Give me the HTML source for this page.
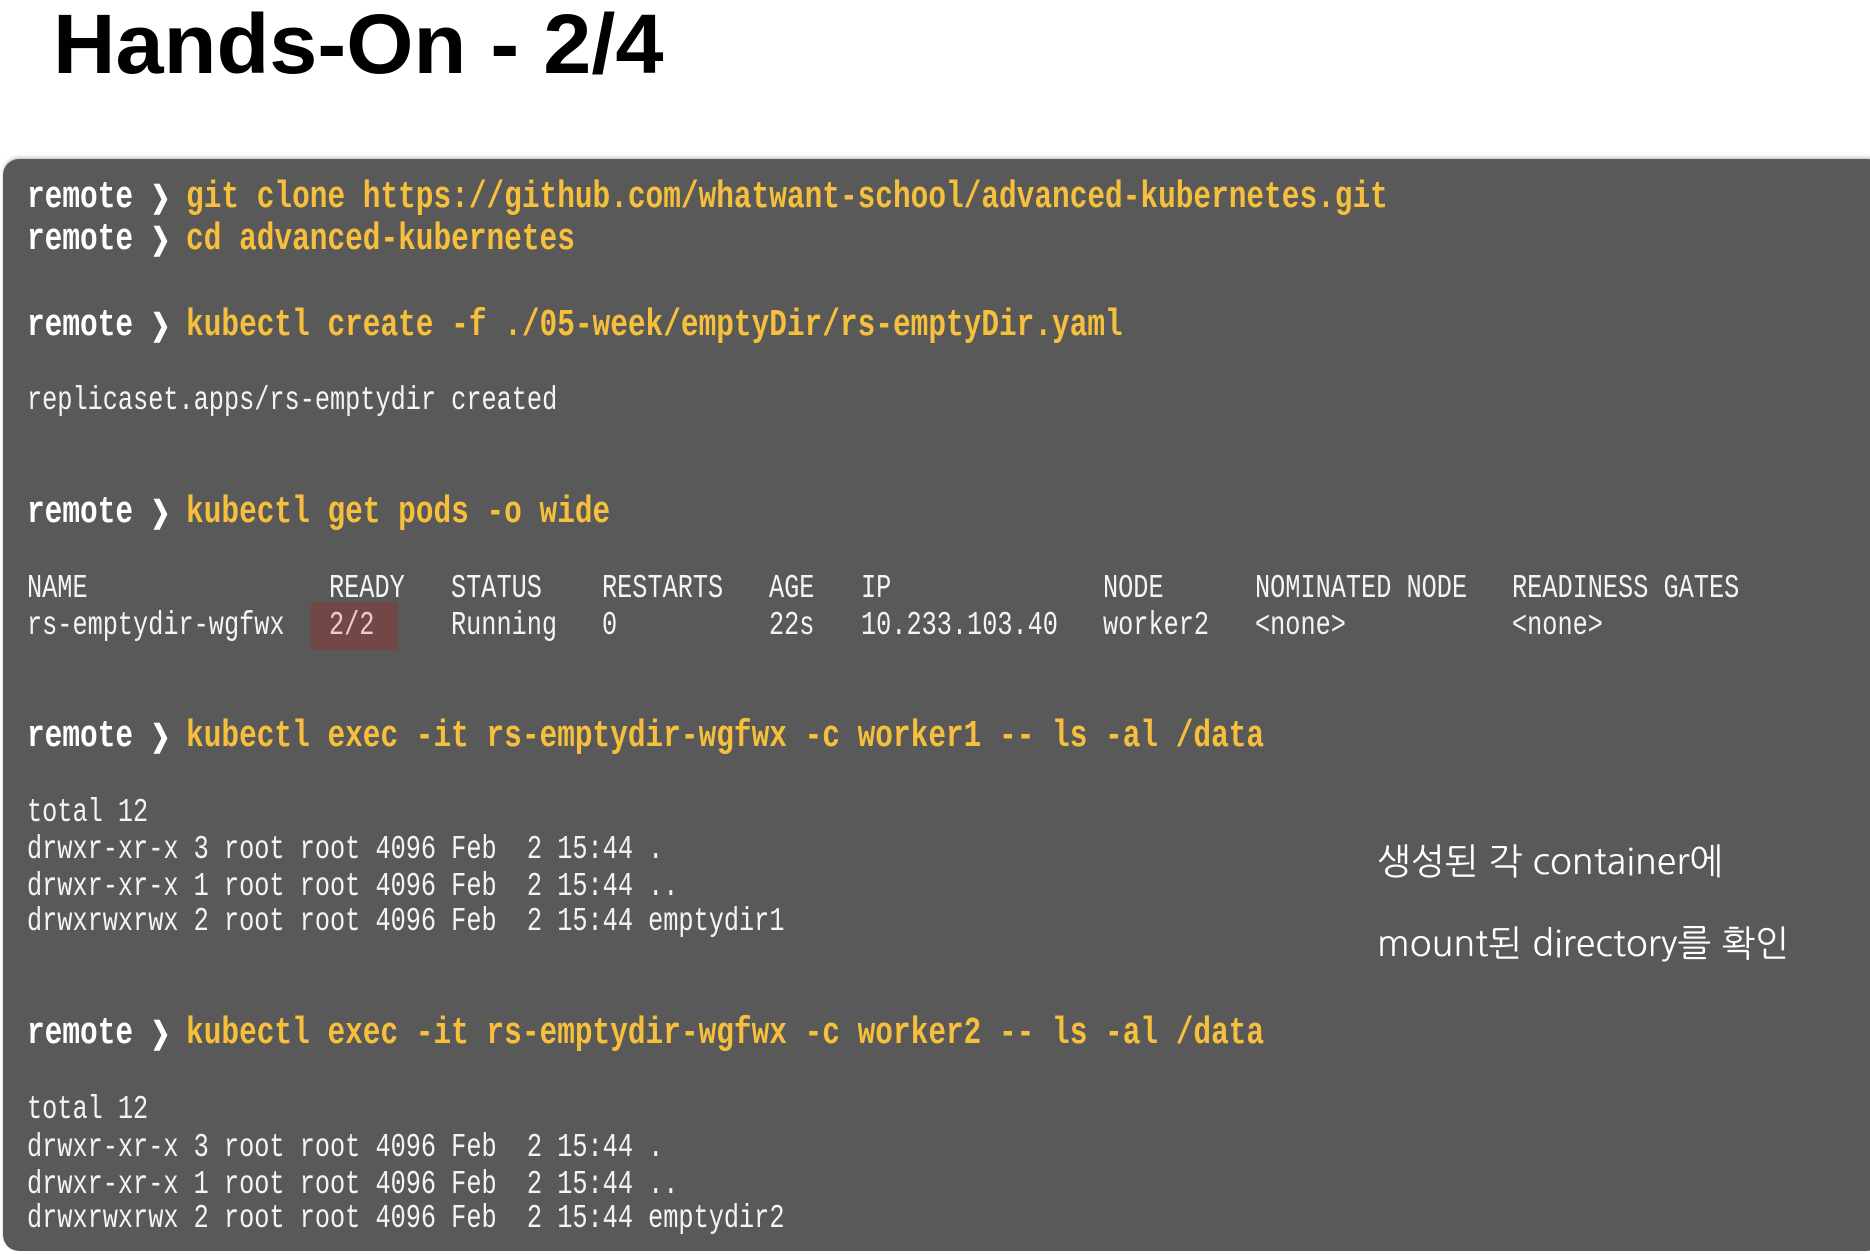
<!DOCTYPE html>
<html><head><meta charset="utf-8"><style>
html,body{margin:0;padding:0;}
body{width:1870px;height:1254px;position:relative;overflow:hidden;background:#fff;}
.title{position:absolute;left:53px;top:-4px;font-family:"Liberation Sans","DejaVu Sans",sans-serif;font-weight:bold;font-size:84px;color:#000;transform:scaleX(1.03);transform-origin:left;white-space:nowrap;}
.term{position:absolute;left:3px;top:159px;width:1880px;height:1092px;background:#595959;border-radius:16px;box-shadow:0 -2px 3px #ccc;}
.l{position:absolute;white-space:pre;font-family:"Liberation Mono",monospace;transform-origin:left center;line-height:40px;height:40px;}
.c{font-size:38px;transform:scaleX(0.775);color:#f6bf3c;font-weight:bold;}
.c b{color:#fff;}
.c i{font-style:normal;font-size:30px;display:inline-block;width:22.8px;text-align:center;}
.o{font-size:33px;transform:scaleX(0.765);color:#f4f4f4;}
.hl{position:absolute;left:311px;top:602px;width:87px;height:48px;background:#744747;}
.pk{color:#f3c9c9;}
.note{position:absolute;color:#fff;font-family:"NanumGothic","Noto Sans CJK KR",sans-serif;font-size:36px;white-space:nowrap;font-weight:300;}
</style></head><body>
<div class="title">Hands-On - 2/4</div>
<div class="term"></div>
<div class="hl"></div>
<div class="l c" style="left:27px;top:178px"><b>remote <i>❯</i></b> git clone https://github.com/whatwant-school/advanced-kubernetes.git</div>
<div class="l c" style="left:27px;top:220px"><b>remote <i>❯</i></b> cd advanced-kubernetes</div>
<div class="l c" style="left:27px;top:306px"><b>remote <i>❯</i></b> kubectl create -f ./05-week/emptyDir/rs-emptyDir.yaml</div>
<div class="l o" style="left:27px;top:381px">replicaset.apps/rs-emptydir created</div>
<div class="l c" style="left:27px;top:493px"><b>remote <i>❯</i></b> kubectl get pods -o wide</div>
<div class="l o" style="left:27px;top:569px">NAME</div>
<div class="l o" style="left:329px;top:569px">READY</div>
<div class="l o" style="left:451px;top:569px">STATUS</div>
<div class="l o" style="left:602px;top:569px">RESTARTS</div>
<div class="l o" style="left:769px;top:569px">AGE</div>
<div class="l o" style="left:861px;top:569px">IP</div>
<div class="l o" style="left:1103px;top:569px">NODE</div>
<div class="l o" style="left:1255px;top:569px">NOMINATED NODE</div>
<div class="l o" style="left:1512px;top:569px">READINESS GATES</div>
<div class="l o" style="left:27px;top:606px">rs-emptydir-wgfwx</div>
<div class="l o pk" style="left:329px;top:606px">2/2</div>
<div class="l o" style="left:451px;top:606px">Running</div>
<div class="l o" style="left:602px;top:606px">0</div>
<div class="l o" style="left:769px;top:606px">22s</div>
<div class="l o" style="left:861px;top:606px">10.233.103.40</div>
<div class="l o" style="left:1103px;top:606px">worker2</div>
<div class="l o" style="left:1255px;top:606px">&lt;none&gt;</div>
<div class="l o" style="left:1512px;top:606px">&lt;none&gt;</div>
<div class="l c" style="left:27px;top:717px"><b>remote <i>❯</i></b> kubectl exec -it rs-emptydir-wgfwx -c worker1 -- ls -al /data</div>
<div class="l o" style="left:27px;top:793px">total 12</div>
<div class="l o" style="left:27px;top:830px">drwxr-xr-x 3 root root 4096 Feb  2 15:44 .</div>
<div class="l o" style="left:27px;top:867px">drwxr-xr-x 1 root root 4096 Feb  2 15:44 ..</div>
<div class="l o" style="left:27px;top:902px">drwxrwxrwx 2 root root 4096 Feb  2 15:44 emptydir1</div>
<div class="l c" style="left:27px;top:1014px"><b>remote <i>❯</i></b> kubectl exec -it rs-emptydir-wgfwx -c worker2 -- ls -al /data</div>
<div class="l o" style="left:27px;top:1090px">total 12</div>
<div class="l o" style="left:27px;top:1128px">drwxr-xr-x 3 root root 4096 Feb  2 15:44 .</div>
<div class="l o" style="left:27px;top:1165px">drwxr-xr-x 1 root root 4096 Feb  2 15:44 ..</div>
<div class="l o" style="left:27px;top:1199px">drwxrwxrwx 2 root root 4096 Feb  2 15:44 emptydir2</div>
<div class="note" style="left:1377px;top:840px">생성된 각 container에</div>
<div class="note" style="left:1377px;top:922px">mount된 directory를 확인</div>
</body></html>
